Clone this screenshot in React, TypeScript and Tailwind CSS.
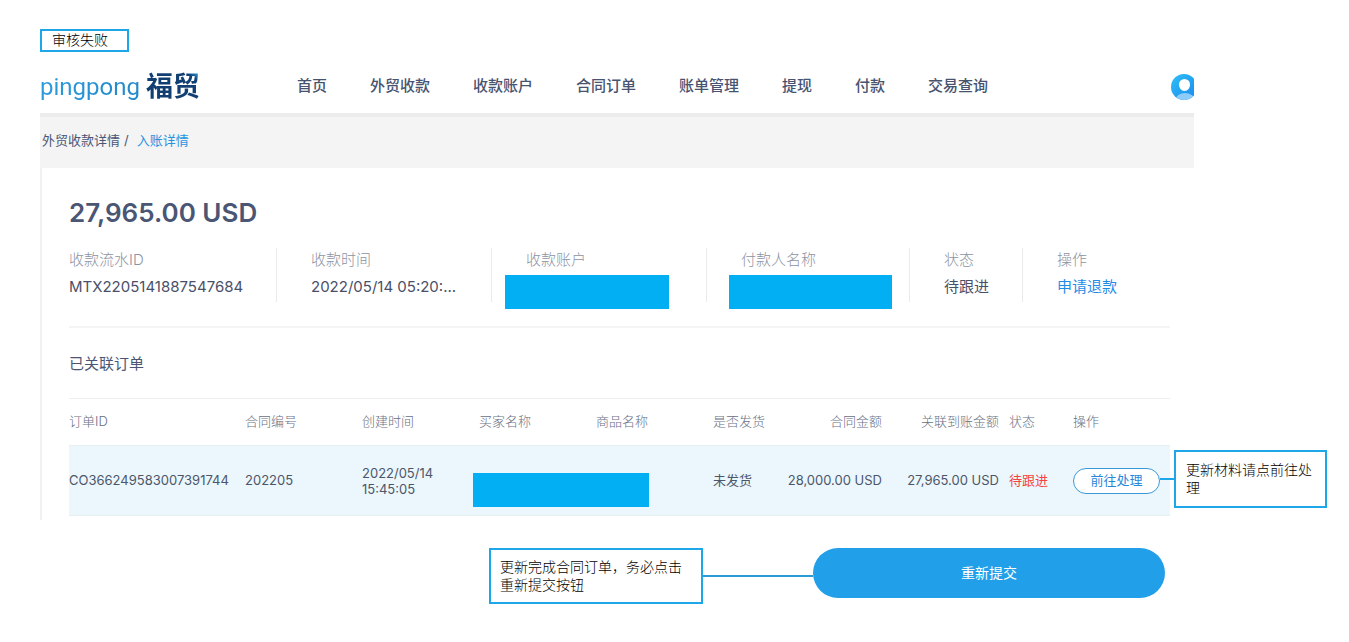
import type { ReactNode } from "react";
import { clsx } from "clsx";

const navItems = ["首页", "外贸收款", "收款账户", "合同订单", "账单管理", "提现", "付款", "交易查询"];

const columns = [
  { label: "订单ID", width: "w-[176px]" },
  { label: "合同编号", width: "w-[117px]" },
  { label: "创建时间", width: "w-[117px]" },
  { label: "买家名称", width: "w-[117px]" },
  { label: "商品名称", width: "w-[117px]" },
  { label: "是否发货", width: "w-[62px]" },
  { label: "合同金额", width: "w-[107px]", align: "text-right" },
  { label: "关联到账金额", width: "w-[117px]", align: "text-right" },
  { label: "状态", width: "w-[74px]", align: "pl-[10px]" },
  { label: "操作", width: "w-[97px]" },
];

function Logo() {
  return (
    <a href="#" className="flex w-[256px] shrink-0 items-center gap-[6px]" aria-label="pingpong 福贸">
      <span className="bg-linear-to-r from-[#2b9be0] to-[#2388c8] bg-clip-text font-['Roboto',sans-serif] text-2xl leading-10 text-transparent">
        pingpong
      </span>
      <span className="bg-linear-to-tr from-[#123f72] from-80% to-[#2b9be0] to-90% bg-clip-text text-[27px] leading-10 font-bold text-transparent">
        福贸
      </span>
    </a>
  );
}

function Avatar() {
  return (
    <svg width="23" height="26" viewBox="0 0 23 26" aria-hidden="true">
      <defs>
        <linearGradient id="avatar" x1="0" y1="0" x2="1" y2="1">
          <stop offset="0" stopColor="#2fc0f6" />
          <stop offset="1" stopColor="#1888ee" />
        </linearGradient>
        <clipPath id="disc">
          <circle cx="13" cy="13" r="13" />
        </clipPath>
      </defs>
      <g clipPath="url(#disc)">
        <rect width="26" height="26" fill="url(#avatar)" />
        <ellipse cx="14" cy="26" rx="9.5" ry="7" fill="#8dcbf8" />
        <path d="M8 10.500a5.500 5.500 0 0 1 11 0c0 3.500-2.200 6.500-5.500 6.500S8 14 8 10.500z" fill="#fff" />
      </g>
    </svg>
  );
}

function Field({ label, className, children }: { label: string; className?: string; children: ReactNode }) {
  return (
    <div className={clsx("h-[54px]", className)}>
      <dt className="text-[15px] leading-6 font-light text-[#8d93a2]">{label}</dt>
      <dd className="h-[30px] text-[15px] leading-[30px] whitespace-nowrap text-[#4a5068]">{children}</dd>
    </div>
  );
}

function Note({ className, children }: { className?: string; children: ReactNode }) {
  return (
    <div className={clsx("border-2 border-[#1ea7e8] bg-white text-sm leading-[18px] font-light text-black", className)}>
      {children}
    </div>
  );
}

export default function App() {
  return (
    <div className="min-h-screen bg-white pt-[29px] pr-[155px] pb-8 pl-10 font-['Inter','Noto_Sans_CJK_SC',sans-serif] text-[#4a5674]">
      <Note className="w-[89px] px-[10px] pb-px">审核失败</Note>

      <header className="flex h-[61px] items-center pt-2">
        <Logo />
        <nav className="flex flex-1 gap-[43px] pl-px text-[15px] font-medium whitespace-nowrap text-[#47536f]">
          {navItems.map((item) => (
            <a key={item} href="#">
              {item}
            </a>
          ))}
        </nav>
        <button type="button" aria-label="账户">
          <Avatar />
        </button>
      </header>

      <div className="flex h-[55px] items-center border-t-4 border-[#ececec] bg-[#f4f4f5] pb-1 text-[13px]">
        <a href="#" className="pl-[2px]">外贸收款详情</a>
        <span className="pr-2 pl-1">/</span>
        <a href="#" className="text-[#2a93de]">入账详情</a>
      </div>

      <main className="border-l-2 border-[#f1f1f2] pr-6 pb-1 pl-[27px]">
        <h1 className="pt-[25px] text-[26px] leading-10 font-semibold text-[#4a5674]">27,965.00 USD</h1>

        <dl className="mt-[15px] flex border-b-2 border-[#f4f4f5] pb-6">
          <Field label="收款流水ID" className="w-[207px]">MTX2205141887547684</Field>
          <Field label="收款时间" className="w-[215px] border-l border-[#ebebee] pl-[34px]">2022/05/14 05:20:...</Field>
          <Field label="收款账户" className="w-[215px] border-l border-[#ebebee] pl-[34px]">
            <div className="mt-[3px] -ml-[21px] h-[34px] w-[164px] bg-[#03aff3]" />
          </Field>
          <Field label="付款人名称" className="w-[203px] border-l border-[#ebebee] pl-[34px]">
            <div className="mt-[3px] -ml-[12px] h-[34px] w-[163px] bg-[#03aff3]" />
          </Field>
          <Field label="状态" className="w-[113px] border-l border-[#ebebee] pl-[34px]">待跟进</Field>
          <Field label="操作" className="flex-1 border-l border-[#ebebee] pl-[34px]">
            <a href="#" className="text-[#1f8ce6]">申请退款</a>
          </Field>
        </dl>

        <h2 className="pt-[25px] pb-[23px] text-[15px] leading-[22px]">已关联订单</h2>

        <table className="w-full table-fixed text-left text-[13px] whitespace-nowrap">
          <thead>
            <tr className="h-[47px] border-t border-[#efeff1] text-[#687084]">
              {columns.map((c) => (
                <th key={c.label} className={clsx("font-light", c.width, c.align)}>
                  {c.label}
                </th>
              ))}
            </tr>
          </thead>
          <tbody>
            <tr className="h-[70px] border-y border-[#e8eff1] bg-[#ebf7fc] text-[#4c566b]">
              <td>CO366249583007391744</td>
              <td>202205</td>
              <td className="leading-4">
                2022/05/14
                <br />
                15:45:05
              </td>
              <td colSpan={2}>
                <div className="mt-[18px] -ml-[6px] h-[34px] w-[176px] bg-[#03aff3]" />
              </td>
              <td>未发货</td>
              <td className="text-right">28,000.00 USD</td>
              <td className="text-right">27,965.00 USD</td>
              <td className="pl-[10px] text-[#f5413f]">待跟进</td>
              <td>
                <div className="relative w-[87px]">
                  <button type="button" className="h-[26px] w-full rounded-full border border-[#3a9ad9] bg-white text-[#2a87d8]">
                    前往处理
                  </button>
                  <div className="absolute -top-[18px] left-full flex items-center">
                    <span className="h-[2px] w-[14px] bg-[#1ea7e8]" />
                    <Note className="w-[153px] px-[10px] py-[9px] whitespace-normal">更新材料请点前往处理</Note>
                  </div>
                </div>
              </td>
            </tr>
          </tbody>
        </table>
      </main>

      <div className="mt-7 flex items-start justify-end pr-[29px]">
        <Note className="w-[214px] px-[9px] py-[8px]">更新完成合同订单，务必点击重新提交按钮</Note>
        <span className="mt-[27px] h-[2px] w-[110px] bg-[#2a9bd4]" />
        <button type="button" className="h-[50px] w-[352px] rounded-full bg-[#219fe8] text-sm text-white">
          重新提交
        </button>
      </div>
    </div>
  );
}
